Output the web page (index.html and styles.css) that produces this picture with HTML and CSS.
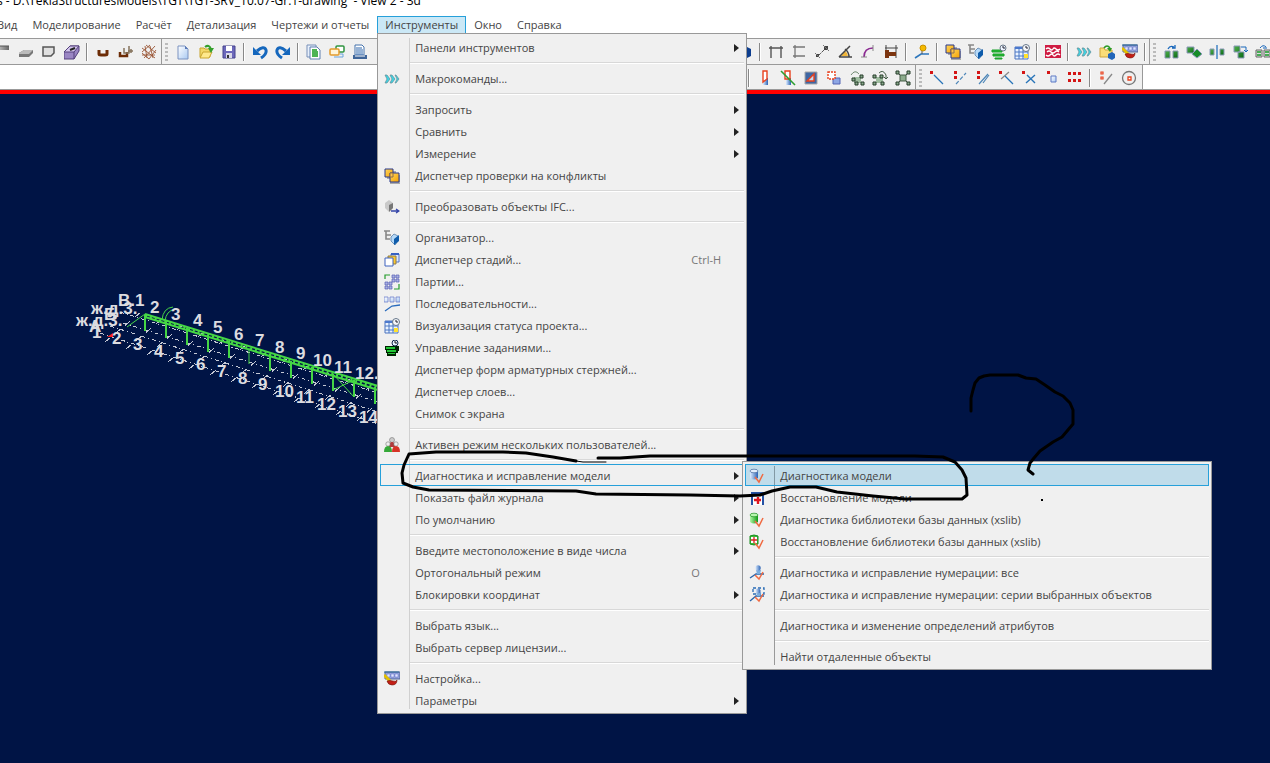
FILE: index.html
```html
<!DOCTYPE html>
<html lang="ru">
<head>
    <meta charset="UTF-8">
    <meta name="viewport" content="width=device-width, initial-scale=1.0">
    <title>Tekla Structures</title>
    <link rel="stylesheet" href="styles.css">
</head>
<body>
    <!-- icon sprite -->
    <svg class="sprite" aria-hidden="true">
        <defs>
            <linearGradient id="gBlue"><stop offset="0" stop-color="#dcecff"/><stop offset="1" stop-color="#2a62b4"/></linearGradient>
            <linearGradient id="gGreen"><stop offset="0" stop-color="#b4f7a8"/><stop offset="1" stop-color="#0c9a12"/></linearGradient>
            <linearGradient id="gDark" x2="1" y2="1"><stop offset="0" stop-color="#4fae4a"/><stop offset="1" stop-color="#0a6a16"/></linearGradient>
            <linearGradient id="gPage" x2="1" y2="1"><stop offset="0" stop-color="#fff"/><stop offset="1" stop-color="#a9c9f2"/></linearGradient>
            <linearGradient id="gGold" x2="1" y2="1"><stop offset="0" stop-color="#ffd860"/><stop offset="1" stop-color="#f5a000"/></linearGradient>
            <linearGradient id="gGray"><stop offset="0" stop-color="#d8d8d8"/><stop offset="1" stop-color="#666"/></linearGradient>
        </defs>
        <symbol id="beam" viewBox="0 0 16 16"><path d="M0 2h14v4H0z" fill="url(#gGray)"/><path d="M0 2h14" stroke="#555"/></symbol>
        <symbol id="slab" viewBox="0 0 16 16"><path d="M1 9l5-3h9v3l-4 4H1z" fill="#777"/><path d="M1 9l5-3h9l-4 4H1z" fill="#bbb"/></symbol>
        <symbol id="panel" viewBox="0 0 16 16"><path d="M2 3h11v6l-3 3H2z" fill="#e0e0e0" stroke="#555" stroke-width="1.5"/></symbol>
        <symbol id="item" viewBox="0 0 16 16"><path d="M0 8l6-6h9v5l-5 8H0z" fill="#9a86c4" stroke="#54417c"/><path d="M0 8l6-6h9l-5 6z" fill="#d4c6ee" stroke="#54417c"/><path d="M10 8v7" stroke="#54417c"/><path d="M6 6l5-2" stroke="#222" stroke-width="2"/></symbol>
        <symbol id="rebar" viewBox="0 0 16 16"><path d="M4 6v4q0 1 2 1h4q2 0 2-1V6" fill="none" stroke="#6c2c06" stroke-width="3"/></symbol>
        <symbol id="rebars" viewBox="0 0 16 16"><path d="M2 8v4h7V8" fill="none" stroke="#6c2c06" stroke-width="2.5"/><path d="M6 4v5h5V2M10 7h5M13 5v4" fill="none" stroke="#85735c" stroke-width="1.5"/></symbol>
        <symbol id="mesh" viewBox="0 0 16 16"><path d="M1 4l13 10M5 1l10 8M1 9l7 6M14 2L3 14M9 1L1 8M15 6L8 15M4 2l2 12M1 11h13M9 2l3 12" stroke="#9a5636" stroke-width=".9" fill="none"/></symbol>
        <symbol id="new" viewBox="0 0 16 16"><path d="M3 2h7l3 3v10H3z" fill="url(#gPage)" stroke="#7b92c0"/><path d="M10 2v3h3" fill="#5b7ab8"/></symbol>
        <symbol id="open" viewBox="0 0 16 16"><path d="M2 4h4l1 1h5v8H2z" fill="#f3d868" stroke="#c9a52f"/><path d="M2 14l3-6h9l-3 6z" fill="#ffe98c" stroke="#c9a52f"/><path d="M7 3q4-3 6 2" fill="none" stroke="#35a02c" stroke-width="2"/><path d="M10 4h6l-3 5z" fill="#35a02c"/></symbol>
        <symbol id="save" viewBox="0 0 16 16"><path d="M2 2h12v12H2z" fill="#6c68bb" stroke="#45428c"/><path d="M5 2h6v5H5z" fill="#fff"/><path d="M5 9h6v5H5z" fill="#d8d8e8"/><path d="M6 11h2v3H6z" fill="#333"/></symbol>
        <symbol id="undo" viewBox="0 0 16 16"><path d="M5 7q7-6 9-1 1 4-5 8" fill="none" stroke="#1567bd" stroke-width="3"/><path d="M1 3v8h8z" fill="#1567bd"/></symbol>
        <symbol id="redo" viewBox="0 0 16 16"><path d="M11 7Q4 1 2 6q-1 4 5 8" fill="none" stroke="#1567bd" stroke-width="3"/><path d="M15 3v8H7z" fill="#1567bd"/></symbol>
        <symbol id="report" viewBox="0 0 16 16"><path d="M1 1h9v12H1z" fill="#e8f0fc" stroke="#7890b8"/><path d="M4 3h7l3 3v9H4z" fill="#fff" stroke="#6080b0"/><path d="M6 6h5M6 8h6M6 10h6M6 12h6" stroke="#149c1c" stroke-width="1.4"/></symbol>
        <symbol id="cards" viewBox="0 0 16 16"><rect x="7" y="2" width="8" height="6" rx="1" fill="#fff" stroke="#2f9440" stroke-width="1.5"/><rect x="1" y="5" width="9" height="6" rx="1" fill="#fff4d8" stroke="#e39b2b" stroke-width="1.5"/><path d="M11 10h3v3H5" fill="none" stroke="#68a4dd"/></symbol>
        <symbol id="print" viewBox="0 0 16 16"><path d="M3 1h7l2 2v8H3z" fill="#fff" stroke="#4472ac"/><path d="M4 4h6M4 6h7M4 8h7M4 10h7" stroke="#2f66ac"/><path d="M1 11h14v4H1z" fill="#3f6599"/><path d="M3 12h10" stroke="#fff"/></symbol>
        <symbol id="dimx" viewBox="0 0 16 16"><path d="M3 2v12M13 2v12M1 4h14" stroke="#555" fill="none" stroke-width="1.4"/></symbol>
        <symbol id="dimy" viewBox="0 0 16 16"><path d="M2 3h12M2 12h12M4 1v13" stroke="#777" fill="none" stroke-width="1.3"/></symbol>
        <symbol id="dimfree" viewBox="0 0 16 16"><path d="M4 12L12 4" stroke="#555" stroke-dasharray="4 1"/><path d="M10 2h4v4h-4zM2 10h3v3H2z" fill="#444"/><path d="M9 1l6 6M1 9l5 5" stroke="#777"/></symbol>
        <symbol id="angle" viewBox="0 0 16 16"><path d="M4 12l4-5q3 2 3 5z" fill="#f0b63a"/><path d="M2 13L13 2M2 13h13M8 5q4 3 4 8" stroke="#444" stroke-width="1.5" fill="none"/></symbol>
        <symbol id="arc" viewBox="0 0 16 16"><path d="M4 13Q4 4 13 4" fill="none" stroke="#8b2a92" stroke-width="1.7"/><path d="M1 13h6M13 1v6" stroke="#888"/></symbol>
        <symbol id="bolt" viewBox="0 0 16 16"><path d="M3 1v13M13 1v13M2 4h13" stroke="#444"/><path d="M2 6h4v8H2zM6 8h7v4H6z" fill="#7c3510"/></symbol>
        <symbol id="pin" viewBox="0 0 16 16"><path d="M1 14l6-4h8" stroke="#2c76bc" stroke-width="1.6" fill="none"/><path d="M8 10V6" stroke="#555"/><circle cx="9" cy="4" r="3" fill="#f5ba00" stroke="#c99000"/></symbol>
        <symbol id="clash" viewBox="0 0 16 16"><path d="M3 3h9v4h4v9H6v-5H3z" fill="#aaa"/><path d="M1 1h8v8H1z" fill="url(#gGold)" stroke="#29398d"/><path d="M6 5h9v9H6z" fill="url(#gGold)" stroke="#29398d"/><path d="M6 5h3v4H6z" fill="#ffc54a" stroke="#8b6d4d"/></symbol>
        <symbol id="organizer" viewBox="0 0 16 16"><path d="M0 1h6M2 1v8h4M2 5h5" fill="none" stroke="#888" stroke-width="1.6"/><path d="M7 7l3-3 4 2v5l-3 4-4-4z" fill="#b5d9f8" stroke="#7194b9"/><path d="M10 9l5-4v6l-5 4z" fill="#0e5cab"/></symbol>
        <symbol id="tasks" viewBox="0 0 16 16"><path d="M1 6h10v2H1zM2 10h11v2H2zM4 14h7v1H4z" fill="#28bb35" stroke="#17a028"/><circle cx="12" cy="4" r="3" fill="#eef5ff" stroke="#6a7888"/><path d="M12 2v2h2" stroke="#223" fill="none"/></symbol>
        <symbol id="tasksdark" viewBox="0 0 16 16"><path d="M1 6h14v5h-1v2h-2v3H3v-3H2v-3H1z" fill="#020"/><path d="M2 7h9v2H2zM3 10h9v2H3zM4 13h7v1H4z" fill="#22c836"/><circle cx="11" cy="3" r="3" fill="#e9f2ff" stroke="#122548"/><path d="M11 1v2h2" stroke="#111" fill="none"/></symbol>
        <symbol id="status" viewBox="0 0 16 16"><path d="M1 3h13v12H1z" fill="#eaf3ff" stroke="#4a72be"/><path d="M1 3h13v2H1z" fill="#4c79ce"/><path d="M1 8h13M1 12h13M5 4v11M9 4v11" stroke="#4976c4"/><path d="M10 10h4v4h-4z" fill="#ffe12d"/><circle cx="12" cy="4" r="3.5" fill="#f6f8fc" stroke="#667688"/><path d="M12 2v2h2" stroke="#223" fill="none"/></symbol>
        <symbol id="redtile" viewBox="0 0 16 16"><path d="M0 1h16v13H0z" fill="#cf1c43"/><path d="M1 5q2-2 4 0t3 0 3 0 4 0M1 11q2 2 4 0t3 0 3 0 4 0M2 8q2-2 4 0t4 0 4 0" stroke="#fff" stroke-width="1.3" fill="none"/></symbol>
        <symbol id="macro" viewBox="0 0 16 16"><path d="M1 4h2l3 4-3 4H1l2-4zM6 4h2l3 4-3 4H6l2-4zM11 4h1l3 4-3 4h-1l2-4z" fill="#3ed4e4" stroke="#648b94" stroke-width=".7"/></symbol>
        <symbol id="import" viewBox="0 0 16 16"><path d="M1 4h4l1 2h7v7H1z" fill="#fadd78" stroke="#cda53c"/><path d="M5 4q3-4 6 0" stroke="#2a9b25" stroke-width="1.6" fill="none"/><path d="M8 4h5l-2 4z" fill="#2a9b25"/><path d="M9 10l4-2 3 2v4l-3 2-4-2z" fill="#2165b9"/></symbol>
        <symbol id="custom" viewBox="0 0 16 16"><path d="M1 1h15v7H1z" fill="#93a1dc" stroke="#526798"/><path d="M0 1h15" stroke="#286a9a"/><path d="M3 3h3v3H3zM7 3h3v3H7zM11 3h3v3h-3z" fill="#e0e6ff" stroke="#6670c4" stroke-width=".5"/><path d="M0 4l6 6" stroke="#e3c000" stroke-width="3"/><path d="M3 10q3-1 6 0 3 1 4-1 0 5-5 5-4 0-5-4z" fill="#c41f16" stroke="#701008" stroke-width=".6"/></symbol>
        <symbol id="copy1" viewBox="0 0 16 16"><path d="M2 7h5v7H2zM10 7h5v7h-5z" fill="url(#gDark)" stroke="#8a98b8"/><path d="M5 5q2-4 6-2M9 4h3V1" fill="none" stroke="#1766bb" stroke-width="1.3"/></symbol>
        <symbol id="copy2" viewBox="0 0 16 16"><path d="M1 3h7v6H1z" fill="url(#gDark)" stroke="#8a98b8"/><path d="M11 5l5 5-5 4-5-4z" fill="#168c29" stroke="#8a98b8"/></symbol>
        <symbol id="mirror" viewBox="0 0 16 16"><path d="M1 5h4v6H1zM11 5h4v6h-4z" fill="url(#gDark)" stroke="#8a98b8"/><path d="M8 1v14" stroke="#2874c0" stroke-width="1.3"/></symbol>
        <symbol id="copy3" viewBox="0 0 16 16"><path d="M2 2h6v6H2zM6 8h6v6H6z" fill="url(#gDark)" stroke="#8a98b8"/><path d="M9 3h5v5M12 6l2 2 2-2" fill="none" stroke="#1766bb"/></symbol>
        <symbol id="copy4" viewBox="0 0 16 16"><path d="M1 6h6v7H1zM9 6h6v7H9z" fill="#ddd" stroke="#666"/><path d="M2 8h4M2 11h4M10 8h4M10 11h4" stroke="#169c29" stroke-width="1.6"/><path d="M5 4q3-4 6-1M8 4h4" fill="none" stroke="#1766bb"/></symbol>
        <symbol id="cube" viewBox="0 0 16 16"><path d="M2 5l6-3 6 3v7l-6 3-6-3z" fill="#0d3e8f"/></symbol>

        <symbol id="col1" viewBox="0 0 16 16"><path d="M6 8h5v7H6z" fill="url(#gBlue)"/><path d="M6 1h4v8L6 12z" fill="#fff" stroke="#e8401d" stroke-width="1.4"/></symbol>
        <symbol id="col2" viewBox="0 0 16 16"><path d="M6 8h5v7H6z" fill="url(#gBlue)"/><path d="M5 1h5v8H5z" fill="#fff" stroke="#e8401d" stroke-width="1.4"/><path d="M1 1l14 14" stroke="#2f9e31" stroke-width="1.6"/></symbol>
        <symbol id="cutpart" viewBox="0 0 16 16"><path d="M2 2h12v12H2z" fill="#3f67a4" stroke="#a8a8a8"/><path d="M4 11l7-7v7z" fill="#c8d8ef" stroke="#e8401d" stroke-width="1.4"/></symbol>
        <symbol id="cutpoly" viewBox="0 0 16 16"><path d="M7 8h7v6H7z" fill="#8da6e4" stroke="#5265b4"/><path d="M2 2h7v7H2z" fill="#fff" stroke="#e8401d" stroke-dasharray="2 1" stroke-width="1.4"/></symbol>
        <symbol id="nodes1" viewBox="0 0 16 16"><path d="M5 7h7v6H5z" fill="#9fbda0"/><path d="M2 5q4-6 8-1" fill="none" stroke="#718b72"/><path d="M3 8h3v3H3zM6 12h3v3H6zM11 5h3v3h-3zM12 12h3v3h-3z" fill="#87a88a" stroke="#263d2b"/></symbol>
        <symbol id="nodes2" viewBox="0 0 16 16"><path d="M4 7h7v6H4z" fill="#9fbda0"/><path d="M7 3q4-4 7 2v4M12 7l2 2 2-2" fill="none" stroke="#455d46"/><path d="M1 5h3v3H1zM1 12h3v3H1zM8 5h3v3H8zM9 12h3v3H9z" fill="#87a88a" stroke="#263d2b"/></symbol>
        <symbol id="nodes3" viewBox="0 0 16 16"><path d="M2 2l12 12M14 2L2 14" stroke="#394c3b"/><path d="M5 5h6v6H5z" fill="#8dac8d" stroke="#455d46"/><path d="M1 1h3v3H1zM12 1h3v3h-3zM1 12h3v3H1zM12 12h3v3h-3z" fill="#87a88a" stroke="#263d2b"/></symbol>
        <symbol id="pt1" viewBox="0 0 16 16"><path d="M5 5l9 9" stroke="#2874b8" stroke-width="1.3"/><path d="M1 1h3v3H1z" fill="#d41515"/></symbol>
        <symbol id="pt2" viewBox="0 0 16 16"><path d="M4 14L14 3" stroke="#4d86b8" stroke-dasharray="4 2" stroke-width="1.2"/><path d="M2 1h3v3H2zM2 6h3v3H2z" fill="#d41515"/></symbol>
        <symbol id="pt3" viewBox="0 0 16 16"><path d="M4 14L13 4M8 13l6-8" stroke="#4d86b8" stroke-width="1.2"/><path d="M2 1h3v3H2zM2 6h3v3H2z" fill="#d41515"/></symbol>
        <symbol id="pt4" viewBox="0 0 16 16"><path d="M3 9l8-7" stroke="#888" stroke-width="1.2"/><path d="M7 6l8 8" stroke="#2874b8" stroke-width="1.2"/><path d="M1 1h3v3H1z" fill="#d41515"/></symbol>
        <symbol id="pt5" viewBox="0 0 16 16"><path d="M5 13l9-8M6 5l8 8" stroke="#2874b8" stroke-width="1.4"/><path d="M1 1h3v3H1z" fill="#d41515"/></symbol>
        <symbol id="pt6" viewBox="0 0 16 16"><path d="M7 6h5v6H7z" fill="url(#gPage)" stroke="#5c78c4"/><path d="M3 1h3v3H3z" fill="#d41515"/></symbol>
        <symbol id="pt7" viewBox="0 0 16 16"><path d="M1 2h3v3H1zM6 2h3v3H6zM11 2h3v3h-3zM1 9h3v3H1zM6 9h3v3H6zM11 9h3v3h-3z" fill="#d41515"/></symbol>
        <symbol id="pt8" viewBox="0 0 16 16"><path d="M6 14l8-10" stroke="#888" stroke-width="1.3"/><path d="M3 2h2v2H3zM3 7h2v2H3z" fill="#fff" stroke="#e8401d" stroke-width="1.2"/></symbol>
        <symbol id="pt9" viewBox="0 0 16 16"><circle cx="8" cy="8" r="6.5" fill="none" stroke="#777" stroke-width="1.3"/><path d="M7 7h3v3H7z" fill="#fff" stroke="#e8401d" stroke-width="1.3"/></symbol>

        <symbol id="ifc" viewBox="0 0 16 16"><path d="M1 4l4-3 4 3v5l-4 4-4-4z" fill="#c9c9c9"/><path d="M5 6l4-2v5l-4 4z" fill="#777"/><path d="M7 12h8M12 10l3 2-3 2" stroke="#3444a8" fill="none" stroke-width="1.3"/></symbol>
        <symbol id="phases" viewBox="0 0 16 16"><path d="M7 2h8v8H7z" fill="#dbe8ff" stroke="#5574c4"/><path d="M4 4h8v8H4z" fill="#ffc82a" stroke="#8c7c4d"/><path d="M1 6h8v8H1z" fill="#fff" stroke="#3e63bf"/><path d="M7 2h8" stroke="#3661c4" stroke-width="2"/></symbol>
        <symbol id="lots" viewBox="0 0 16 16"><path d="M1 5V1h5M15 10v5h-5" stroke="#249c2b" fill="none" stroke-width="1.2"/><path d="M8 1h3v3H8zM12 1h3v3h-3zM8 5h3v3H8zM12 5h3v3h-3zM1 8h3v3H1zM5 8h3v3H5zM1 12h3v3H1zM5 12h3v3H5z" fill="#a9b0e2" stroke="#5860b4" stroke-width=".7"/></symbol>
        <symbol id="sequence" viewBox="0 0 16 16"><path d="M0 1h4v5H0zM6 1h4v5H6zM12 1h4v5h-4z" fill="url(#gPage)" stroke="#6f82cc" stroke-width=".8"/><path d="M1 15l7-5 8-1" stroke="#2a6bbd" stroke-width="1.3" fill="none"/></symbol>
        <symbol id="users" viewBox="0 0 16 16"><circle cx="8" cy="3" r="2.5" fill="#ccc" stroke="#777" stroke-width=".6"/><path d="M5 10q0-5 3-5t3 5z" fill="#b13b3b"/><circle cx="4" cy="7" r="2.2" fill="#eee" stroke="#777" stroke-width=".6"/><circle cx="12" cy="7" r="2.2" fill="#eee" stroke="#777" stroke-width=".6"/><path d="M0 15q0-6 4-6t4 6z" fill="#35a838"/><path d="M8 15q0-6 4-6t4 6z" fill="#d63326"/></symbol>
        <symbol id="dbcheck" viewBox="0 0 16 16"><path d="M1 3v7q4 3 8 0V3z" fill="url(#gBlue)"/><ellipse cx="5" cy="3" rx="4" ry="1.8" fill="#e2eefc" stroke="#45699c" stroke-width=".7"/><path d="M6 9l4 5 4-8" stroke="#f06a42" stroke-width="1.5" fill="none"/></symbol>
        <symbol id="dbrepair" viewBox="0 0 16 16"><path d="M2 2h13v13H2z" fill="#2552a4"/><path d="M4 6h9v9H4z" fill="#fff"/><path d="M9 7v7M5 10h7" stroke="#e01820" stroke-width="2.4"/></symbol>
        <symbol id="libcheck" viewBox="0 0 16 16"><path d="M1 3v7q4 3 8 0V3z" fill="url(#gGreen)"/><ellipse cx="5" cy="3" rx="4" ry="1.8" fill="#b8f5ae" stroke="#1b8f21" stroke-width=".7"/><path d="M6 9l4 5 4-8" stroke="#f06a42" stroke-width="1.5" fill="none"/></symbol>
        <symbol id="librepair" viewBox="0 0 16 16"><path d="M1 2q4-2 8 0v8q-4 2-8 0z" fill="#3cbc38" stroke="#1b8f21"/><path d="M2 3h6v6H2z" fill="#fff"/><path d="M5 3v6M2 6h6" stroke="#d82020" stroke-width="1.3"/><path d="M6 9l4 5 4-8" stroke="#f06a42" stroke-width="1.5" fill="none"/></symbol>
        <symbol id="numall" viewBox="0 0 16 16"><path d="M1 13l6-4h8" stroke="#2866ac" fill="none" stroke-width="1.3"/><path d="M7 5l5 0-1 4H8z" fill="#7baede"/><circle cx="9" cy="3" r="2.7" fill="url(#gBlue)"/><path d="M6 10l4 4 4-7" stroke="#f06a42" stroke-width="1.5" fill="none"/></symbol>
        <symbol id="numsel" viewBox="0 0 16 16"><path d="M4 1h11v6H4z" stroke="#286bb5" stroke-dasharray="3 2" fill="none" stroke-width="1.3"/><path d="M1 14l6-5h8" stroke="#2866ac" fill="none" stroke-width="1.3"/><path d="M7 5h5l-1 4H8z" fill="#7baede"/><circle cx="9" cy="4" r="2.5" fill="url(#gBlue)"/><path d="M6 10l4 4 4-7" stroke="#f06a42" stroke-width="1.5" fill="none"/></symbol>
    </svg>

    <header class="titlebar">s - D:\TeklaStructuresModels\TGT\TGT-SRV_10.07-Gr.1-drawing&nbsp; - View 2 - 3d</header>

    <nav class="menubar">
        <button>Вид</button>
        <button>Моделирование</button>
        <button>Расчёт</button>
        <button>Детализация</button>
        <button>Чертежи и отчеты</button>
        <div class="dropdown">
            <button class="open">Инструменты</button>
            <div class="menu">
                <button>Панели инструментов<i class="arrow"></i></button>
                <hr>
                <button><svg><use href="#macro"/></svg>Макрокоманды...</button>
                <hr>
                <button>Запросить<i class="arrow"></i></button>
                <button>Сравнить<i class="arrow"></i></button>
                <button>Измерение<i class="arrow"></i></button>
                <button><svg><use href="#clash"/></svg>Диспетчер проверки на конфликты</button>
                <hr>
                <button><svg><use href="#ifc"/></svg>Преобразовать объекты IFC...</button>
                <hr>
                <button><svg><use href="#organizer"/></svg>Организатор...</button>
                <button><svg><use href="#phases"/></svg>Диспетчер стадий...<kbd>Ctrl-H</kbd></button>
                <button><svg><use href="#lots"/></svg>Партии...</button>
                <button><svg><use href="#sequence"/></svg>Последовательности...</button>
                <button><svg><use href="#status"/></svg>Визуализация статуса проекта...</button>
                <button><svg><use href="#tasksdark"/></svg>Управление заданиями...</button>
                <button>Диспетчер форм арматурных стержней...</button>
                <button>Диспетчер слоев...</button>
                <button>Снимок с экрана</button>
                <hr>
                <button><svg><use href="#users"/></svg>Активен режим нескольких пользователей...</button>
                <hr>
                <div class="dropdown">
                    <button class="expanded">Диагностика и исправление модели<i class="arrow"></i></button>
                    <div class="menu submenu">
                        <button class="selected"><svg><use href="#dbcheck"/></svg>Диагностика модели</button>
                        <button><svg><use href="#dbrepair"/></svg>Восстановление модели</button>
                        <button><svg><use href="#libcheck"/></svg>Диагностика библиотеки базы данных (xslib)</button>
                        <button><svg><use href="#librepair"/></svg>Восстановление библиотеки базы данных (xslib)</button>
                        <hr>
                        <button><svg><use href="#numall"/></svg>Диагностика и исправление нумерации: все</button>
                        <button><svg><use href="#numsel"/></svg>Диагностика и исправление нумерации: серии выбранных объектов</button>
                        <hr>
                        <button>Диагностика и изменение определений атрибутов</button>
                        <hr>
                        <button>Найти отдаленные объекты</button>
                    </div>
                </div>
                <button>Показать файл журнала<i class="arrow"></i></button>
                <button>По умолчанию<i class="arrow"></i></button>
                <hr>
                <button>Введите местоположение в виде числа<i class="arrow"></i></button>
                <button>Ортогональный режим<kbd>O</kbd></button>
                <button>Блокировки координат<i class="arrow"></i></button>
                <hr>
                <button>Выбрать язык...</button>
                <button>Выбрать сервер лицензии...</button>
                <hr>
                <button><svg><use href="#custom"/></svg>Настройка...</button>
                <button>Параметры<i class="arrow"></i></button>
            </div>
        </div>
        <button>Окно</button>
        <button>Справка</button>
    </nav>

    <div class="toolbar">
        <div class="group model">
            <button aria-label="Балка"><svg><use href="#beam"/></svg></button>
            <button aria-label="Плита"><svg><use href="#slab"/></svg></button>
            <button aria-label="Панель"><svg><use href="#panel"/></svg></button>
            <button aria-label="Элемент"><svg><use href="#item"/></svg></button>
            <span class="sep"></span>
            <button aria-label="Стержень"><svg><use href="#rebar"/></svg></button>
            <button aria-label="Группа стержней"><svg><use href="#rebars"/></svg></button>
            <button aria-label="Сетка"><svg><use href="#mesh"/></svg></button>
        </div>
        <div class="group file">
            <span class="grip"></span>
            <button aria-label="Создать"><svg><use href="#new"/></svg></button>
            <button aria-label="Открыть"><svg><use href="#open"/></svg></button>
            <button aria-label="Сохранить"><svg><use href="#save"/></svg></button>
            <span class="sep"></span>
            <button aria-label="Отменить"><svg><use href="#undo"/></svg></button>
            <button aria-label="Повторить"><svg><use href="#redo"/></svg></button>
            <span class="sep"></span>
            <button aria-label="Отчет"><svg><use href="#report"/></svg></button>
            <button aria-label="Чертежи"><svg><use href="#cards"/></svg></button>
            <button aria-label="Печать"><svg><use href="#print"/></svg></button>
        </div>
        <div class="group tools">
            <button aria-label="Вид"><svg><use href="#cube"/></svg></button>
            <span class="sep"></span>
            <button aria-label="Размер X"><svg><use href="#dimx"/></svg></button>
            <button aria-label="Размер Y"><svg><use href="#dimy"/></svg></button>
            <button aria-label="Свободный размер"><svg><use href="#dimfree"/></svg></button>
            <button aria-label="Угол"><svg><use href="#angle"/></svg></button>
            <button aria-label="Дуга"><svg><use href="#arc"/></svg></button>
            <button aria-label="Болты"><svg><use href="#bolt"/></svg></button>
            <span class="sep"></span>
            <button aria-label="Точка"><svg><use href="#pin"/></svg></button>
            <span class="sep"></span>
            <button aria-label="Конфликты"><svg><use href="#clash"/></svg></button>
            <button aria-label="Организатор"><svg><use href="#organizer"/></svg></button>
            <button aria-label="Задания"><svg><use href="#tasks"/></svg></button>
            <button aria-label="Статус"><svg><use href="#status"/></svg></button>
            <span class="sep"></span>
            <button aria-label="Tekla"><svg><use href="#redtile"/></svg></button>
            <span class="sep"></span>
            <button aria-label="Макрокоманды"><svg><use href="#macro"/></svg></button>
            <button aria-label="Импорт"><svg><use href="#import"/></svg></button>
            <button aria-label="Настройка"><svg><use href="#custom"/></svg></button>
            <span class="sep"></span>
        </div>
        <div class="group">
            <span class="grip"></span>
            <button aria-label="Копировать"><svg><use href="#copy1"/></svg></button>
            <button aria-label="Повернуть"><svg><use href="#copy2"/></svg></button>
            <button aria-label="Отразить"><svg><use href="#mirror"/></svg></button>
            <button aria-label="Переместить"><svg><use href="#copy3"/></svg></button>
            <button aria-label="Копировать в"><svg><use href="#copy4"/></svg></button>
        </div>
    </div>

    <div class="toolbar second">
        <div class="group cuts">
            <span class="sep"></span>
            <button aria-label="Подгонка"><svg><use href="#col1"/></svg></button>
            <button aria-label="Разрез линией"><svg><use href="#col2"/></svg></button>
            <button aria-label="Разрез деталью"><svg><use href="#cutpart"/></svg></button>
            <button aria-label="Разрез полигоном"><svg><use href="#cutpoly"/></svg></button>
            <button aria-label="Создать компонент"><svg><use href="#nodes1"/></svg></button>
            <button aria-label="Изменить компонент"><svg><use href="#nodes2"/></svg></button>
            <button aria-label="Расчленить компонент"><svg><use href="#nodes3"/></svg></button>
        </div>
        <div class="group points">
            <span class="grip"></span>
            <button aria-label="Точка на линии"><svg><use href="#pt1"/></svg></button>
            <button aria-label="Точки вдоль линии"><svg><use href="#pt2"/></svg></button>
            <button aria-label="Параллельные точки"><svg><use href="#pt3"/></svg></button>
            <button aria-label="Проекция"><svg><use href="#pt4"/></svg></button>
            <button aria-label="Пересечение"><svg><use href="#pt5"/></svg></button>
            <button aria-label="Точка детали"><svg><use href="#pt6"/></svg></button>
            <button aria-label="Точки болтов"><svg><use href="#pt7"/></svg></button>
            <span class="sep"></span>
            <button aria-label="Вспомогательная линия"><svg><use href="#pt8"/></svg></button>
            <button aria-label="Окружность"><svg><use href="#pt9"/></svg></button>
        </div>
    </div>

    <main class="view">
        <svg class="model3d" viewBox="0 94 400 350">
            <!-- grid axes -->
            <g class="grid">
                <path d="M100 333L378 424M110 326L378 412M123 323L378 402M120 312L378 393"/>
                <path class="cross" d="M105 342l36-30M126 349l36-30M147 355l36-30M168 362l36-30M189 369l36-30M210 375l36-30M231 382l36-30M252 388l36-30M273 395l36-30M294 402l36-30M315 408l36-30M336 415l36-30M357 421l21-18"/>
            </g>
            <!-- truss -->
            <g class="steel">
                <path class="chord" d="M145 314L378 386M145 317L378 390"/>
                <path class="lattice" d="M145 316L378 388"/>
                <path d="M127 327L145 314M162 320Q163 308 173 307M165 321Q166 311 175 309"/>
                <path class="post" d="M145 315v16M166 321v17M187 328v17M208 335v17M229 341v17M270 354v17M291 361v17M312 367v17M333 374v17M354 380v17M375 387v17"/>
                <path d="M249 348v16M333 374L354 397M333 390L354 380"/>
            </g>
            <path d="M107 337l6-4v4z" fill="#f22"/>
            <g class="labels">
                <text x="118" y="306">В.1</text>
                <text x="150" y="313">2</text><text x="171" y="320">3</text><text x="193" y="326">4</text><text x="213" y="333">5</text>
                <text x="234" y="340">6</text><text x="255" y="346">7</text><text x="275" y="353">8</text><text x="296" y="359">9</text>
                <text x="313" y="366">10</text><text x="334" y="373">11</text><text x="355" y="379">12.</text>
                <text x="91" y="314">ж.д.3.</text><text x="104" y="320">Б</text><text x="76" y="326">ж.д.3.</text><text x="89" y="332">А</text>
                <text x="92" y="338">1</text><text x="112" y="344">2</text><text x="133" y="350">3</text><text x="154" y="357">4</text>
                <text x="175" y="364">5</text><text x="196" y="370">6</text><text x="217" y="377">7</text><text x="238" y="384">8</text>
                <text x="258" y="390">9</text><text x="275" y="397">10</text><text x="296" y="403">11</text><text x="317" y="410">12</text>
                <text x="338" y="417">13</text><text x="359" y="423">14</text>
            </g>
        </svg>
    </main>

    <!-- hand-drawn marks -->
    <svg class="ink" viewBox="0 0 1270 763">
        <path d="M598 458L620 458L650 456L915 456L943 457L955 462L962 470L966 478L967 495L962 499L905 499L873 496L837 492L816 487L790 487L772 491L760 495L740 496L690 495L596 494L576 491L429 490L413 487L403 483L402 473L404 465L409 454L436 452L503 452L526 453L553 457L576 461"/>
        <path class="thin" d="M576 461L583 462H606"/>
        <path d="M971 411V398L973 390L975 383L979 378L984 376L990 375H1018L1026 378L1036 379L1045 385L1055 392L1063 396L1070 403L1073 410V424L1062 437L1053 442L1040 451L1034 458L1030 463L1028 470L1033 474"/>
        <path d="M1041 499h2v2h-2z" class="dot"/>
    </svg>
</body>
</html>
```
FILE: styles.css
```css
* {
    box-sizing: border-box;
}
body {
    margin: 0;
    min-height: 100vh;
    display: flex;
    flex-direction: column;
    position: relative;
    overflow: hidden;
    background-color: #fff;
    font-family: "Open Sans", "Noto Sans", sans-serif;
    font-size: 11px;
    color: #444;
}
button {
    border: none;
    padding: 0;
    background: none;
    font: inherit;
    color: inherit;
    white-space: nowrap;
}
.sprite {
    position: absolute;
    width: 0;
    height: 0;
}
.titlebar {
    height: 16px;
    margin-left: -3px;
    font-size: 12px;
    line-height: 1px;
    color: #000;
    white-space: nowrap;
}
/* Menu bar */
.menubar {
    display: flex;
    gap: 1px;
    height: 22px;
    margin-left: -10px;
}
.menubar > button, .open {
    height: 18px;
    padding: 0 7px;
    line-height: 18px;
}
.dropdown {
    position: relative;
}
.open {
    background-color: #cbe8f6;
    border: 1px solid #26a0da;
    padding: 0 7px;
    line-height: 16px;
}
/* Drop-down menus */
.menu {
    position: absolute;
    z-index: 2;
    top: 17px;
    left: 0;
    width: 370px;
    padding: 2px;
    border: 1px solid #999;
    background: linear-gradient(#d0d0d0, #d0d0d0) 31px 4px / 1px calc(100% - 8px) no-repeat #f0f0f0;
}
.menu button {
    display: flex;
    align-items: center;
    position: relative;
    width: 100%;
    height: 22px;
    padding: 1px 18px 0 34px;
    border: 1px solid transparent;
    text-align: left;
}
.menu button svg {
    width: 16px;
    height: 16px;
    margin-left: -31px;
    margin-right: 15px;
}
.menu hr {
    height: 2px;
    margin: 4px 0 3px 30px;
    border: none;
    border-top: 1px solid #d8d8d8;
    background-color: #fff;
}
.menu kbd {
    font: inherit;
    color: #777;
    width: 34px;
    margin-left: auto;
}
.arrow {
    margin-left: auto;
    margin-right: -14px;
    border: 4px solid transparent;
    border-left: 5px solid #222;
    border-right: none;
}
.menu .expanded {
    border-color: #26a0da;
}
.submenu {
    top: -3px;
    left: 362px;
    width: 470px;
    background-image: linear-gradient(#999, #999);
}
.menu .selected {
    border-color: #26a0da;
    background: linear-gradient(#8299a4, #8299a4) 28px 1px / 1px 100% no-repeat #c0dcea;
}
/* Toolbars */
.toolbar {
    display: flex;
    height: 27px;
    overflow: hidden;
    background-color: #f0f0f0;
    border-top: 1px solid #999;
    border-bottom: 1px solid #999;
}
.group {
    display: flex;
    flex: none;
    align-items: center;
}
.group button {
    width: 23px;
    height: 23px;
}
.group svg {
    display: block;
    width: 16px;
    height: 16px;
    margin: auto;
}
.sep {
    width: 2px;
    height: 18px;
    margin: 0 3px;
    background-color: #888;
    border-right: 1px solid #fff;
}
.grip {
    width: 3px;
    height: 18px;
    margin: 0 3px;
    background: repeating-linear-gradient(#bbb 0 2px, transparent 2px 4px);
}
.group + .group {
    border-left: 1px solid #999;
}
.model {
    margin-left: -9px;
    padding-right: 1px;
}
.group.tools {
    margin-left: 362px;
    border-left: none;
}
.second {
    height: 25px;
    border-top: none;
    background-color: #fff;
}
.second .group {
    padding-top: 2px;
    background-color: #f0f0f0;
}
.cuts {
    margin-left: 745px;
    padding-right: 1px;
}
.points {
    border-right: 1px solid #999;
    padding-right: 2px;
}
/* 3D view */
.view {
    flex: 1;
    border-top: 4px solid #f00;
    background-color: #001445;
}
.model3d {
    display: block;
    width: 400px;
    height: 350px;
}
.grid {
    fill: none;
    stroke: #c4c8d4;
    stroke-dasharray: 4 3 1 3;
    shape-rendering: crispEdges;
}
.cross {
    stroke-dasharray: 7 6;
}
.steel {
    fill: none;
    stroke: #45d645;
    stroke-width: 1;
}
.chord, .post {
    stroke-width: 2;
}
.lattice {
    stroke-width: 3;
    stroke-dasharray: 2 3;
}
.labels {
    font: bold 17px "Liberation Sans", Arial, sans-serif;
    fill: #dcdce0;
}
.ink {
    position: absolute;
    z-index: 3;
    top: 0;
    left: 0;
    width: 1270px;
    height: 763px;
    fill: none;
    stroke: #000;
    stroke-width: 3;
    stroke-linecap: round;
    stroke-linejoin: round;
    pointer-events: none;
}
.ink .thin {
    stroke-width: 1;
}
.ink .dot {
    fill: #000;
    stroke: none;
}
```
